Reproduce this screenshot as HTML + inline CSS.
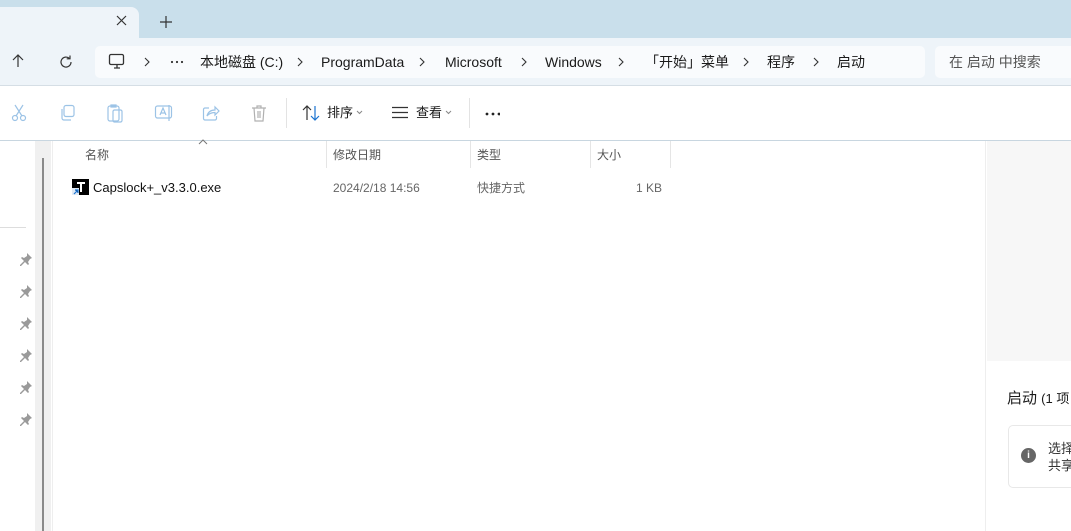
<!DOCTYPE html>
<html><head><meta charset="utf-8"><style>
*{margin:0;padding:0;box-sizing:border-box}
body{width:1071px;height:531px;overflow:hidden;background:#fff;font-family:"Liberation Sans","Noto Sans CJK SC",sans-serif;font-size:13px;color:#1a1a1a;position:relative}
.a{position:absolute;white-space:nowrap;line-height:16px}
.ic{position:absolute}
.t{font-size:14px;top:54px}
</style></head><body>
<div class="a" style="left:0;top:0;width:1071px;height:38px;background:#c9dfeb"></div>
<div class="a" style="left:0;top:7px;width:139px;height:32px;background:#eef4f9;border-radius:0 8px 0 0"></div>
<svg class="ic" style="left:116px;top:15px" width="11" height="11" viewBox="0 0 11 11" stroke="#333" stroke-width="1.2"><path d="M1 1l9 9M10 1l-9 9"/></svg>
<svg class="ic" style="left:160px;top:16px" width="12" height="12" viewBox="0 0 12 12" stroke="#333" stroke-width="1.2"><path d="M6 0v12M0 6h12"/></svg>
<div class="a" style="left:0;top:38px;width:1071px;height:48px;background:#eef4f9;border-bottom:1px solid #d5dee5"></div>
<div class="a" style="left:95px;top:46px;width:830px;height:32px;background:#f9fbfd;border-radius:5px"></div>
<div class="a" style="left:935px;top:46px;width:136px;height:32px;background:#f9fbfd;border-radius:5px 0 0 5px"></div>
<svg class="ic" style="left:10px;top:53px" width="16" height="16" viewBox="0 0 16 16" fill="none" stroke="#333" stroke-width="1.2"><path d="M8 14V2M3 7l5-5 5 5"/></svg>
<svg class="ic" style="left:58px;top:54px" width="16" height="16" viewBox="0 0 16 16" fill="none" stroke="#333" stroke-width="1.2"><path d="M13 8a5 5 0 1 1-1.5-3.5M12 1.5v3.3H8.7"/></svg>
<svg class="ic" style="left:108px;top:53px" width="18" height="17" viewBox="0 0 18 17" fill="none" stroke="#333" stroke-width="1.3"><rect x="1.5" y="1.5" width="14" height="10" rx="1.5"/><path d="M6 15h6M9 12v3"/></svg>
<svg class="ic" style="left:0;top:0" width="1071" height="90" fill="none" stroke="#333" stroke-width="1.1">
<path d="M145 58l4 4-4 4M298 58l4 4-4 4M420 58l4 4-4 4M522 58l4 4-4 4M619 58l4 4-4 4M744 58l4 4-4 4M814 58l4 4-4 4"/>
<g fill="#333" stroke="none"><circle cx="172" cy="62" r="1.1"/><circle cx="177" cy="62" r="1.1"/><circle cx="182" cy="62" r="1.1"/></g>
</svg>
<div class="a t" style="left:200px">本地磁盘 (C:)</div>
<div class="a t" style="left:321px">ProgramData</div>
<div class="a t" style="left:445px">Microsoft</div>
<div class="a t" style="left:545px">Windows</div>
<div class="a t" style="left:645px">「开始」菜单</div>
<div class="a t" style="left:767px">程序</div>
<div class="a t" style="left:837px">启动</div>
<div class="a t" style="left:949px;color:#555">在 启动 中搜索</div>
<svg class="ic" style="left:10px;top:103px" width="18" height="20" viewBox="0 0 18 20" fill="none" stroke="#9cc3e6" stroke-width="1.2"><circle cx="5" cy="15" r="2.5"/><circle cx="13" cy="15" r="2.5"/><path d="M6 13 13 2M12 13 5 2"/></svg>
<svg class="ic" style="left:59px;top:104px" width="18" height="18" viewBox="0 0 18 18" fill="none" stroke="#9cc3e6" stroke-width="1.2"><rect x="5" y="1.5" width="10" height="11" rx="2"/><path d="M3 5v9a2 2 0 0 0 2 2h7"/></svg>
<svg class="ic" style="left:106px;top:103px" width="18" height="20" viewBox="0 0 18 20" fill="none" stroke="#9cc3e6" stroke-width="1.2"><rect x="2" y="3" width="11" height="15" rx="2"/><rect x="7" y="7" width="9" height="12" rx="1.5"/><path d="M5 2h5v2H5z"/></svg>
<svg class="ic" style="left:154px;top:104px" width="20" height="18" viewBox="0 0 20 18" fill="none" stroke="#9cc3e6" stroke-width="1.2"><rect x="1.5" y="2" width="16" height="12" rx="2"/><path d="M6 11l3-7 3 7M7 9h4M15 1v16"/></svg>
<svg class="ic" style="left:202px;top:104px" width="18" height="18" viewBox="0 0 18 18" fill="none" stroke="#9cc3e6" stroke-width="1.2"><path d="M7 4H3a1.5 1.5 0 0 0-1.5 1.5v9A1.5 1.5 0 0 0 3 16h10a1.5 1.5 0 0 0 1.5-1.5V12M5 12c1-4 4-6 8-6V3l4 4-4 4V8.5c-3 0-6 1-8 3.5z"/></svg>
<svg class="ic" style="left:251px;top:104px" width="16" height="18" viewBox="0 0 16 18" fill="none" stroke="#b0b0b0" stroke-width="1.2"><path d="M1 4h14M6 4V2h4v2M3 4l1 13h8l1-13M7 7v7M9 7v7"/></svg>
<div class="a" style="left:286px;top:98px;width:1px;height:30px;background:#e3e3e3"></div>
<svg class="ic" style="left:302px;top:105px" width="18" height="16" viewBox="0 0 18 16" fill="none" stroke-width="1.2"><path d="M5 15V1M1 5l4-4 4 4" stroke="#333"/><path d="M13 1v14M9 11l4 4 4-4" stroke="#1a73d0"/></svg>
<div class="a" style="left:327px;top:105px;font-size:13px">排序</div>
<svg class="ic" style="left:0;top:0" width="500" height="130" fill="none" stroke="#888" stroke-width="1"><path d="M357 111l2.5 2.5 2.5-2.5M446 111l2.5 2.5 2.5-2.5"/><g fill="#222" stroke="none"><circle cx="487" cy="114" r="1.4"/><circle cx="493" cy="114" r="1.4"/><circle cx="499" cy="114" r="1.4"/></g></svg>
<svg class="ic" style="left:391px;top:106px" width="18" height="13" viewBox="0 0 18 13" stroke="#333" stroke-width="1.2"><path d="M1 1.5h16M1 6.5h16M1 11.5h16"/></svg>
<div class="a" style="left:416px;top:105px;font-size:13px">查看</div>
<div class="a" style="left:469px;top:98px;width:1px;height:30px;background:#e3e3e3"></div>
<div class="a" style="left:0;top:140px;width:1071px;height:1px;background:#c8d6e0"></div>
<div class="a" style="left:0;top:227px;width:26px;height:1px;background:#ddd"></div>
<div class="a" style="left:35px;top:141px;width:16px;height:390px;background:#f0f0f0"></div>
<div class="a" style="left:42px;top:158px;width:2px;height:373px;background:#8a8a8a"></div>
<div class="a" style="left:52px;top:141px;width:1px;height:390px;background:#eee"></div>
<svg class="ic" style="left:19px;top:252px" width="14" height="175" viewBox="0 0 14 175" fill="#9a9a9a">
<g id="p"><path d="M8 1l5 5-2 1-2 3 1 2-1 1-3-3-4 4-1 0 0-1 4-4-3-3 1-1 2 1 3-2z"/></g>
<use href="#p" y="32"/><use href="#p" y="64"/><use href="#p" y="96"/><use href="#p" y="128"/><use href="#p" y="160"/>
</svg>
<svg class="ic" style="left:198px;top:139px" width="10" height="6" fill="none" stroke="#777"><path d="M1 5l4-4 4 4"/></svg>
<div class="a" style="left:85px;top:147px;color:#555;font-size:12px">名称</div>
<div class="a" style="left:326px;top:141px;width:1px;height:27px;background:#e5e5e5"></div>
<div class="a" style="left:333px;top:147px;color:#555;font-size:12px">修改日期</div>
<div class="a" style="left:470px;top:141px;width:1px;height:27px;background:#e5e5e5"></div>
<div class="a" style="left:477px;top:147px;color:#555;font-size:12px">类型</div>
<div class="a" style="left:590px;top:141px;width:1px;height:27px;background:#e5e5e5"></div>
<div class="a" style="left:597px;top:147px;color:#555;font-size:12px">大小</div>
<div class="a" style="left:670px;top:141px;width:1px;height:27px;background:#e5e5e5"></div>
<div class="a" style="left:72px;top:179px;width:17px;height:16px;background:#000"></div>
<div class="a" style="left:77px;top:182px;width:8px;height:2px;background:#fff"></div>
<div class="a" style="left:80px;top:182px;width:2px;height:10px;background:#fff"></div>
<div class="a" style="left:72px;top:188px;width:7px;height:7px;background:#dfe9f5"></div>
<svg class="ic" style="left:73px;top:189px" width="6" height="6" stroke="#1a73d0" stroke-width="1.2"><path d="M1 5l4-4M2 1h3v3"/></svg>
<div class="a" style="left:93px;top:180px;font-size:13px;color:#111">Capslock+_v3.3.0.exe</div>
<div class="a" style="left:333px;top:180px;font-size:12px;color:#666">2024/2/18 14:56</div>
<div class="a" style="left:477px;top:180px;font-size:12px;color:#666">快捷方式</div>
<div class="a" style="left:636px;top:180px;font-size:12px;color:#666">1 KB</div>
<div class="a" style="left:985px;top:141px;width:1px;height:390px;background:#eee"></div>
<div class="a" style="left:987px;top:141px;width:84px;height:220px;background:#f7f7f7"></div>
<div class="a" style="left:1007px;top:391px;font-size:15px;color:#1a1a1a">启动 <span style="font-size:13px">(1 项</span></div>
<div class="a" style="left:1008px;top:425px;width:70px;height:63px;border:1px solid #e8e8e8;border-radius:5px;background:#fff"></div>
<div class="a" style="left:1021px;top:448px;width:15px;height:15px;border-radius:50%;background:#666;color:#fff;font-size:10px;font-weight:bold;text-align:center;line-height:15px">i</div>
<div class="a" style="left:1048px;top:440px;font-size:13px;color:#333;line-height:17px">选择<br>共享</div>
</body></html>
